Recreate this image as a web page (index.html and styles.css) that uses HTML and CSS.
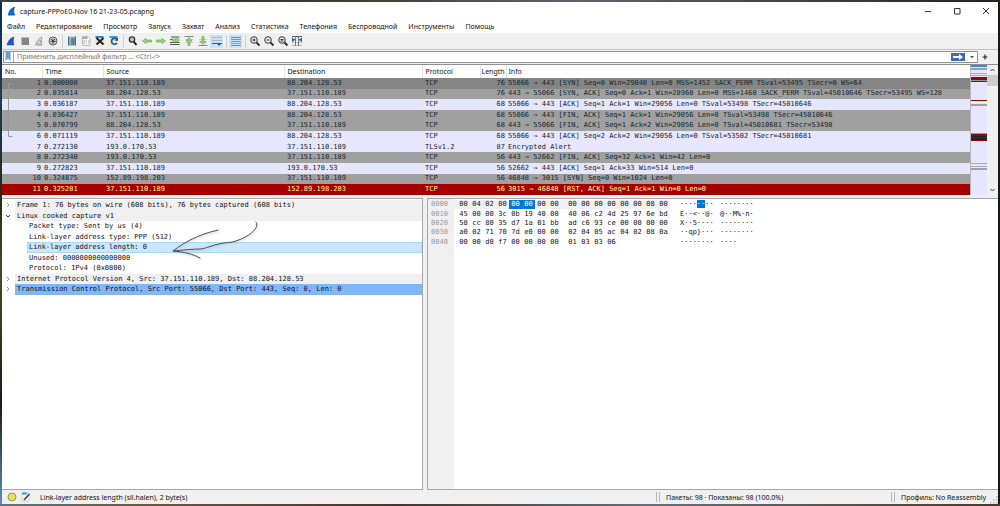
FILE: index.html
```html
<!DOCTYPE html>
<html lang="ru">
<head>
<meta charset="utf-8">
<title>capture-PPPoE0-Nov 16 21-23-05.pcapng</title>
<link rel="stylesheet" href="styles.css">
</head>
<body>
<div class="window">
  <header class="titlebar">
    <svg class="logo" viewBox="0 0 12 12"><path d="M1 11C2 6 4 2 10 1C8 4 8 8 10 11Z" fill="#1769d8"/><path d="M1 11C4 10 7 10 10 11Z" fill="#0a3f9b"/></svg>
    <h1 class="title">capture-PPPoE0-Nov 16 21-23-05.pcapng</h1>
    <div class="controls">
      <button class="control" aria-label="Свернуть"><svg viewBox="0 0 8 8"><path d="M1 4.5H7"/></svg></button>
      <button class="control" aria-label="Развернуть"><svg viewBox="0 0 8 8"><path d="M1.5 1.5H7V7H1.5Z"/></svg></button>
      <button class="control" aria-label="Закрыть"><svg viewBox="0 0 8 8"><path d="M1 1L7 7M7 1L1 7"/></svg></button>
    </div>
  </header>

  <nav class="menu">
    <button>Файл</button><button>Редактирование</button><button>Просмотр</button><button>Запуск</button><button>Захват</button><button>Анализ</button><button>Статистика</button><button>Телефония</button><button>Беспроводной</button><button>Инструменты</button><button>Помощь</button>
  </nav>

  <div class="toolbar">
    <div class="group">
      <button aria-label="Начать захват"><svg viewBox="0 0 12 12"><path d="M2 10C3 6 5 3 9 2C8 5 8 8 9 10Z" fill="#2455cd" stroke="#1b3c98" stroke-width=".5"/></svg></button>
      <button aria-label="Остановить"><svg viewBox="0 0 12 12"><rect x="2.5" y="2.5" width="7.5" height="7.5" fill="#858585"/></svg></button>
      <button aria-label="Перезапустить"><svg viewBox="0 0 12 12" fill="none" stroke="#a2a2a2"><path d="M2.5 10C4 6 6 3 9 2C8 5 8 8 9 10Z" fill="#e0e0e0"/><path d="M4.5 7.5A2 2 0 1 0 7 6M6 5L8 6L6.5 8"/></svg></button>
      <button aria-label="Параметры захвата"><svg viewBox="0 0 12 12" fill="none" stroke="#333"><circle cx="6" cy="6" r="4" stroke="#555"/><circle cx="6" cy="6" r="2" stroke-dasharray="1 .6" stroke-width="1.4"/><circle cx="6" cy="6" r="1" fill="#111" stroke="none"/></svg></button>
    </div>
    <div class="group">
      <button aria-label="Открыть"><svg viewBox="0 0 12 12"><rect x="2" y="1.5" width="8" height="9" fill="#8ab1a8"/><path d="M2.5 1.5V10.5M6 2V10.5M9.5 1.5V10.5" stroke="#486e86"/><path d="M3 2H9" stroke="#bfd3c4"/><path d="M6.5 3H8.5V10H6.5Z" fill="#527ca0"/></svg></button>
      <button aria-label="Сохранить"><svg viewBox="0 0 12 12"><path d="M2.5 1.5H8L10 3.5V10.5H2.5Z" fill="#fafafa" stroke="#b9b9b9"/><path d="M2 2H7.5V4H2Z" fill="#aaa"/><path d="M3 6H5M5.5 6H7M8 6H9.5M3 8H5M5.5 8H7M8 8H9.5" stroke="#b1b1b1"/></svg></button>
      <button aria-label="Закрыть файл"><svg viewBox="0 0 12 12"><path d="M1.5 1.5H9L10.5 3V10.5H1.5Z" fill="#eee9c3"/><path d="M1.5 2H9.5" stroke="#2589cd" stroke-width="2"/><path d="M2.5 3L9.5 9.5M9.5 3L2.5 9.5" stroke="#132235" stroke-width="1.8"/></svg></button>
      <button aria-label="Обновить"><svg viewBox="0 0 12 12"><path d="M1.5 1.5H9L10.5 3V10.5H1.5Z" fill="#eee9c3"/><path d="M1.5 2H9.5" stroke="#36a0d8" stroke-width="2"/><path d="M8.5 4A3 3 0 1 0 9 8" fill="none" stroke="#195ba9" stroke-width="1.7"/><path d="M6.5 5.5L10 2.5V6Z" fill="#195ba9"/></svg></button>
    </div>
    <div class="group">
      <button aria-label="Найти"><svg viewBox="0 0 12 12"><circle cx="5" cy="4.5" r="2.7" fill="#bbb" stroke="#222" stroke-width="1.1"/><path d="M7 7L9.5 10" stroke="#111" stroke-width="1.9"/></svg></button>
      <button aria-label="Назад"><svg viewBox="0 0 12 12" class="green"><path d="M1.5 6L5 3.5V5H10.5V7H5V8.5Z"/></svg></button>
      <button aria-label="Вперёд"><svg viewBox="0 0 12 12" class="green"><path d="M10.5 6L7 3.5V5H1.5V7H7V8.5Z"/></svg></button>
      <button aria-label="Перейти к пакету"><svg viewBox="0 0 12 12"><path d="M2 2H10.5M1 4.5H4M1 7.5H10.5M1 9.5H10.5" stroke="#555"/><path class="green" d="M10.5 5L7 2.5V4H3V6H7V7.5Z"/></svg></button>
      <button aria-label="Первый пакет"><svg viewBox="0 0 12 12"><path d="M1.5 1.5H10.5" stroke="#888"/><path d="M2 4.5H10M2 7.5H10" stroke="#ccc"/><path class="green" d="M6 2.5L9 6H7V10.5H5V6H3Z"/></svg></button>
      <button aria-label="Последний пакет"><svg viewBox="0 0 12 12"><path d="M2 4.5H10M2 7.5H10" stroke="#ccc"/><path d="M1.5 10.5H10.5" stroke="#888"/><path class="green" d="M6 9.5L9 6.5H7V1.5H5V6.5H3Z"/></svg></button>
      <button class="on" aria-label="Автопрокрутка" aria-pressed="true"><svg viewBox="0 0 12 12"><path d="M1 2.5H11M1 5.5H11" stroke="#b1b8ba"/><path d="M1 8.5H11" stroke="#4b5863"/><path d="M6 8.5H10L8 11Z" fill="#1851a4"/></svg></button>
    </div>
    <div class="group">
      <button class="on" aria-label="Раскраска" aria-pressed="true"><svg viewBox="0 0 12 12"><path d="M1 2.5H11" stroke="#7e8791"/><path d="M1 4.5H11M1 6.5H11" stroke="#e36e73"/><path d="M1 8.5H11" stroke="#8f9fd0"/><path d="M1 10.5H11" stroke="#8a8a8a"/></svg></button>
    </div>
    <div class="group">
      <button aria-label="Увеличить"><svg viewBox="0 0 12 12" class="lens"><circle cx="5" cy="5" r="3.3"/><path d="M3.5 5H6.5M5 3.5V6.5"/><path class="handle" d="M7.5 7.5L10.5 10.5"/></svg></button>
      <button aria-label="Уменьшить"><svg viewBox="0 0 12 12" class="lens"><circle cx="5" cy="5" r="3.3"/><path d="M3.5 5H6.5"/><path class="handle" d="M7.5 7.5L10.5 10.5"/></svg></button>
      <button aria-label="Обычный размер"><svg viewBox="0 0 12 12" class="lens"><circle cx="5" cy="5" r="3.3"/><path d="M3.5 4.5H6.5M3.5 6H6.5"/><path class="handle" d="M7.5 7.5L10.5 10.5"/></svg></button>
      <button aria-label="Ширина столбцов"><svg viewBox="0 0 12 12"><path d="M1 1.5H11" stroke="#555"/><path d="M1 7.5H11M1 10.5H11" stroke="#bbb"/><path d="M4.5 1V11M7.5 1V11" stroke="#777"/><path d="M1 2.5V7L4.5 4.8ZM11 2.5V7L7.5 4.8Z" fill="#2565ac"/></svg></button>
    </div>
  </div>

  <form class="filter">
    <div class="field">
      <button type="button" class="bookmark" aria-label="Закладки"><svg viewBox="0 0 8 10"><path d="M1.5 0H6.5V9L4 6.5L1.5 9Z" fill="#6b9ed4"/></svg></button>
      <input type="text" aria-label="Дисплейный фильтр" placeholder="Применить дисплейный фильтр … &lt;Ctrl-/&gt;">
      <button type="button" class="apply" aria-label="Применить"><svg viewBox="0 0 14 8"><path d="M2 3H8V1L12 4L8 7V5H2Z" fill="#fff"/></svg></button>
      <button type="button" class="history" aria-label="История"><svg viewBox="0 0 6 6"><path d="M1 2H5L3 4.5Z" fill="#555"/></svg></button>
    </div>
    <button type="button" class="add" aria-label="Добавить"><svg viewBox="0 0 6 6"><path d="M3 .5V5.5M.5 3H5.5" stroke="#222" stroke-width="1.2"/></svg></button>
  </form>

  <section class="packets">
    <div class="list">
      <table class="packet-table">
        <colgroup><col class="c-no"><col class="c-time"><col class="c-src"><col class="c-dst"><col class="c-proto"><col class="c-len"><col></colgroup>
        <thead><tr><th>No.</th><th>Time</th><th>Source</th><th>Destination</th><th>Protocol</th><th class="num">Length</th><th>Info</th></tr></thead>
        <tbody>
          <tr class="gray selected"><td>1</td><td>0.000000</td><td>37.151.110.189</td><td>88.204.128.53</td><td>TCP</td><td>76</td><td>55066 → 443 [SYN] Seq=0 Win=29040 Len=0 MSS=1452 SACK_PERM TSval=53495 TSecr=0 WS=64</td></tr>
          <tr class="gray"><td>2</td><td>0.035814</td><td>88.204.128.53</td><td>37.151.110.189</td><td>TCP</td><td>76</td><td>443 → 55066 [SYN, ACK] Seq=0 Ack=1 Win=28960 Len=0 MSS=1460 SACK_PERM TSval=45010646 TSecr=53495 WS=128</td></tr>
          <tr><td>3</td><td>0.036187</td><td>37.151.110.189</td><td>88.204.128.53</td><td>TCP</td><td>68</td><td>55066 → 443 [ACK] Seq=1 Ack=1 Win=29056 Len=0 TSval=53498 TSecr=45010646</td></tr>
          <tr class="gray"><td>4</td><td>0.036427</td><td>37.151.110.189</td><td>88.204.128.53</td><td>TCP</td><td>68</td><td>55066 → 443 [FIN, ACK] Seq=1 Ack=1 Win=29056 Len=0 TSval=53498 TSecr=45010646</td></tr>
          <tr class="gray"><td>5</td><td>0.070799</td><td>88.204.128.53</td><td>37.151.110.189</td><td>TCP</td><td>68</td><td>443 → 55066 [FIN, ACK] Seq=1 Ack=2 Win=29056 Len=0 TSval=45010681 TSecr=53498</td></tr>
          <tr><td>6</td><td>0.071119</td><td>37.151.110.189</td><td>88.204.128.53</td><td>TCP</td><td>68</td><td>55066 → 443 [ACK] Seq=2 Ack=2 Win=29056 Len=0 TSval=53502 TSecr=45010681</td></tr>
          <tr><td>7</td><td>0.272130</td><td>193.0.170.53</td><td>37.151.110.189</td><td>TLSv1.2</td><td>87</td><td>Encrypted Alert</td></tr>
          <tr class="gray"><td>8</td><td>0.272340</td><td>193.0.170.53</td><td>37.151.110.189</td><td>TCP</td><td>56</td><td>443 → 52662 [FIN, ACK] Seq=32 Ack=1 Win=42 Len=0</td></tr>
          <tr><td>9</td><td>0.272823</td><td>37.151.110.189</td><td>193.0.170.53</td><td>TCP</td><td>56</td><td>52662 → 443 [ACK] Seq=1 Ack=33 Win=514 Len=0</td></tr>
          <tr class="gray"><td>10</td><td>0.324875</td><td>152.89.198.203</td><td>37.151.110.189</td><td>TCP</td><td>56</td><td>46848 → 3015 [SYN] Seq=0 Win=1024 Len=0</td></tr>
          <tr class="red"><td>11</td><td>0.325201</td><td>37.151.110.189</td><td>152.89.198.203</td><td>TCP</td><td>56</td><td>3015 → 46848 [RST, ACK] Seq=1 Ack=1 Win=0 Len=0</td></tr>
        </tbody>
      </table>
      <svg class="bracket" viewBox="0 0 8 60"><path d="M6 1.5H2.5V54.5H6.5" fill="none" stroke="#97999e"/></svg>
    </div>
    <svg class="minimap" viewBox="0 0 16 130" preserveAspectRatio="none">
      <path d="M0 0H16V130H0Z" fill="#e7e6ff"/>
      <path d="M0 0H16V2H0Z" fill="#2c8ee8"/>
      <path d="M0 3H16V5H0ZM0 39H16V41H0ZM0 103H16V105H0Z" fill="#a0a0a0"/>
      <path d="M0 8H16V9H0ZM0 10H16V11H0ZM0 98H16V99H0ZM0 101H16V102H0Z" fill="#aaa9b5"/>
      <path d="M0 12H16V15H0ZM0 16H16V17H0ZM0 35H16V36H0Z" fill="#a40000"/>
      <path d="M0 15H16V16H0ZM0 68H16V69H0Z" fill="#999"/>
      <path d="M0 37H16V38H0Z" fill="#fff"/>
      <path d="M0 69H16V76H0Z" fill="#12272e"/>
      <path d="M0 69H16V71H0ZM0 72H16V73H0ZM0 75H16V76H0Z" fill="#a40000"/>
    </svg>
    <div class="scrollbar">
      <svg viewBox="0 0 10 10"><path d="M3 6L5 4L7 6"/></svg>
      <div class="thumb"></div>
      <svg viewBox="0 0 10 10"><path d="M3 4L5 6L7 4"/></svg>
    </div>
  </section>

  <main class="panes">
    <section class="pane details">
      <ul class="tree">
        <li class="top"><svg viewBox="0 0 8 8"><path d="M3 2L5 4L3 6"/></svg><span>Frame 1: 76 bytes on wire (608 bits), 76 bytes captured (608 bits)</span></li>
        <li class="top open"><svg viewBox="0 0 8 8"><path d="M2 3L4 5L6 3"/></svg><span>Linux cooked capture v1</span></li>
        <li><span>Packet type: Sent by us (4)</span></li>
        <li><span>Link-layer address type: PPP (512)</span></li>
        <li class="current"><span>Link-layer address length: 0</span></li>
        <li><span>Unused: 0000000000000000</span></li>
        <li><span>Protocol: IPv4 (0x0800)</span></li>
        <li class="top"><svg viewBox="0 0 8 8"><path d="M3 2L5 4L3 6"/></svg><span>Internet Protocol Version 4, Src: 37.151.110.189, Dst: 88.204.128.53</span></li>
        <li class="top related"><svg viewBox="0 0 8 8"><path d="M3 2L5 4L3 6"/></svg><span>Transmission Control Protocol, Src Port: 55066, Dst Port: 443, Seq: 0, Len: 0</span></li>
      </ul>
      <svg class="drawn-arrow" viewBox="0 0 100 44"><path d="M87 4C91 9 82 18 67 23C62 25 57 24 50 26C44 27 38 30 32 31C24 31 14 32 4 33C16 24 28 17 49 12M4 33C15 34 24 36 31 40"/></svg>
    </section>
    <section class="pane bytes">
      <table class="hex">
        <tbody>
          <tr class="hl"><th>0000</th><td>00</td><td>04</td><td>02</td><td>00</td><td class="sel">00</td><td class="sel">00</td><td>00</td><td>00</td><td class="mid">00</td><td>00</td><td>00</td><td>00</td><td>00</td><td>00</td><td>08</td><td>00</td><td class="ascii">····<span class="sel">··</span>··</td><td class="ascii2">········</td></tr>
          <tr><th>0010</th><td>45</td><td>00</td><td>00</td><td>3c</td><td>0b</td><td>19</td><td>40</td><td>00</td><td class="mid">40</td><td>06</td><td>c2</td><td>4d</td><td>25</td><td>97</td><td>6e</td><td>bd</td><td class="ascii">E··&lt;··@·</td><td class="ascii2">@··M%·n·</td></tr>
          <tr><th>0020</th><td>58</td><td>cc</td><td>80</td><td>35</td><td>d7</td><td>1a</td><td>01</td><td>bb</td><td class="mid">ad</td><td>c6</td><td>93</td><td>ce</td><td>00</td><td>00</td><td>00</td><td>00</td><td class="ascii">X··5····</td><td class="ascii2">········</td></tr>
          <tr><th>0030</th><td>a0</td><td>02</td><td>71</td><td>70</td><td>7d</td><td>e0</td><td>00</td><td>00</td><td class="mid">02</td><td>04</td><td>05</td><td>ac</td><td>04</td><td>02</td><td>08</td><td>0a</td><td class="ascii">··qp}···</td><td class="ascii2">········</td></tr>
          <tr><th>0040</th><td>00</td><td>00</td><td>d0</td><td>f7</td><td>00</td><td>00</td><td>00</td><td>00</td><td class="mid">01</td><td>03</td><td>03</td><td>06</td><td></td><td></td><td></td><td></td><td class="ascii">········</td><td class="ascii2">····</td></tr>
        </tbody>
      </table>
    </section>
  </main>

  <footer class="status">
    <div class="field-info">
      <svg viewBox="0 0 10 10"><circle cx="5" cy="5" r="4" fill="#e2e05c" stroke="#9a9a55"/></svg>
      <svg viewBox="0 0 10 10"><path d="M1 1H8V9.5H1Z" fill="#f4f4ee" stroke="#bbb" stroke-width=".5"/><path d="M1 1.5H6" stroke="#2ba5d5" stroke-width="2"/><path d="M3 8L8.5 2" stroke="#444" stroke-width="1.6"/></svg>
      <span>Link-layer address length (sll.halen), 2 byte(s)</span>
    </div>
    <div class="counts">Пакеты: 98 · Показаны: 98 (100.0%)</div>
    <div class="profile">Профиль: No Reassembly</div>
    <svg class="grip" viewBox="0 0 8 8"><path d="M6 0H7.5V1.5H6ZM6 3H7.5V4.5H6ZM6 6H7.5V7.5H6ZM3 3H4.5V4.5H3ZM3 6H4.5V7.5H3ZM0 6H1.5V7.5H0Z" fill="#b5b5b5"/></svg>
  </footer>
</div>
</body>
</html>
```
FILE: styles.css
```css
* { box-sizing: border-box; }

body {
  margin: 0;
  padding: 2px;
  height: 100vh;
  font: 7px/9px "Noto Sans", "Open Sans", sans-serif;
  color: #111;
  background:
    linear-gradient(90deg, #3b3f48, #332f2b 20%, #45423c 40%, #655f70 58%, #4b454f 75%, #22251f) top / 100% 2px no-repeat,
    linear-gradient(90deg, #5a7684, #6b563f 15%, #43362f 40%, #64717a 65%, #4b3a2c) bottom / 100% 2px no-repeat,
    linear-gradient(#0c2c58, #1d3c55 18%, #232b17 38%, #484a22 55%, #1c1c17 80%, #5c94b0) left / 2px 100% no-repeat,
    #171a17;
}

button {
  border: 0;
  padding: 0;
  background: none;
  font: inherit;
  color: inherit;
}

svg { display: block; }

.window {
  height: 100%;
  display: flex;
  flex-direction: column;
  background: #f0f0f0;
}

/* Title and menu */
.titlebar {
  display: flex;
  align-items: center;
  height: 18px;
  padding: 0 8px 0 5px;
  gap: 3px;
  background: #fff;
}

.logo { width: 10px; height: 10px; }

.title {
  flex: 1;
  margin: 0;
  font-size: 7px;
  font-weight: 400;
}

.controls { display: flex; gap: 21px; }

.control svg {
  width: 8px;
  height: 8px;
  fill: none;
  stroke: #333;
}

.menu {
  display: flex;
  align-items: center;
  gap: 11px;
  height: 13px;
  padding: 0 5px;
  background: #fff;
}

/* Toolbar */
.toolbar {
  display: flex;
  align-items: center;
  height: 17px;
  padding: 0 2px;
  border-bottom: 1px solid #c4c4c4;
}

.group {
  display: flex;
  gap: 1px;
}

.group + .group {
  margin-left: 3px;
  padding-left: 2px;
  border-left: 1px solid #cfcfcf;
}

.toolbar button { width: 13px; height: 13px; }
.toolbar svg { width: 12px; height: 12px; margin: 0 auto; }
.toolbar .on { background: #c4e2f8; }
.green { fill: #9dd67c; stroke: #58a038; stroke-width: .6; }
.lens { fill: none; stroke: #333; }
.lens .handle { stroke-width: 2; }

/* Display filter */
.filter {
  display: flex;
  align-items: center;
  gap: 4px;
  height: 14px;
  padding: 0 10px 0 1px;
}

.field {
  flex: 1;
  display: flex;
  align-items: center;
  height: 12px;
  border: 1px solid #949494;
  background: #fff;
}

.bookmark {
  height: 10px;
  padding-right: 1px;
  border-right: 1px solid #aaa;
}

.bookmark svg { width: 8px; height: 10px; }

.field input {
  flex: 1;
  min-width: 0;
  height: 10px;
  padding: 0 3px;
  border: 0;
  outline: 0;
  background: none;
  font: 7px/10px "Noto Sans", "Open Sans", sans-serif;
}

.field input::placeholder { color: #7a7a7a; }
.apply { background: #3a6fb8; }
.apply svg { width: 14px; height: 8px; }
.history { margin: 0 2px 0 4px; }
.history svg, .add svg { width: 6px; height: 6px; }

/* Packet list */
.packets {
  display: flex;
  height: 131px;
  border-top: 1px solid #8e9096;
}

.list {
  position: relative;
  flex: 1;
  min-width: 0;
  background: #fff;
}

.packet-table {
  width: 100%;
  height: 100%;
  table-layout: fixed;
  border-collapse: collapse;
}

.c-no { width: 40px; }
.c-time { width: 61px; }
.c-src { width: 181px; }
.c-dst { width: 138px; }
.c-proto { width: 58px; }
.c-len { width: 26px; }

.packet-table th {
  height: 13px;
  padding: 0 3px;
  border-right: 1px solid #e4e4e4;
  font-weight: 400;
  text-align: left;
}

.packet-table th:last-child { border: 0; padding: 0 2px; }
.packet-table th.num { padding: 0 1px; text-align: right; }

.packet-table td {
  padding: 0 3px;
  font: 7px/9px "DejaVu Sans Mono", monospace;
  white-space: nowrap;
  overflow: hidden;
}

.packet-table td:nth-child(1),
.packet-table td:nth-child(6) { padding: 0 1px; text-align: right; }
.packet-table td:nth-child(2),
.packet-table td:nth-child(7) { padding: 0 2px; }
.packet-table tbody tr { background: #e7e6ff; color: #12272e; }
.packet-table tbody .gray { background: #a0a0a0; }
.packet-table tbody .selected { background: #858585; }
.packet-table tbody .red { background: #a40000; color: #fffc9c; }

.bracket {
  position: absolute;
  left: 4px;
  top: 17px;
  width: 8px;
  height: 60px;
}

.minimap { width: 17px; height: 100%; border-left: 1px solid #b5b5bd; }

.scrollbar {
  display: flex;
  flex-direction: column;
  width: 11px;
}

.scrollbar svg {
  height: 10px;
  fill: none;
  stroke: #444;
}

.thumb {
  height: 11px;
  margin-bottom: auto;
  background: #cdcdcd;
}

/* Lower panes */
.panes {
  flex: 1;
  display: grid;
  grid-template-columns: 421fr 571fr;
  gap: 4px;
  min-height: 0;
  padding-top: 3px;
}

.pane {
  position: relative;
  border: 1px solid #a3a7ad;
  background: #fff;
  overflow: hidden;
}

.details { border-left: 0; }
.bytes { border-right: 0; }

.tree {
  display: grid;
  grid-auto-rows: 1fr;
  height: 96px;
  margin: 0;
  padding: 1px 0 0;
  list-style: none;
  font: 7px/10px "DejaVu Sans Mono", monospace;
  white-space: nowrap;
}

.tree li {
  display: flex;
  padding-left: 25px;
}

.tree span { flex: 1; padding-left: 2px; }
.tree .top { padding-left: 2px; }
.tree .top span { background: #f0f0f0; }
.tree svg { width: 8px; height: 8px; margin: 1px 3px 0 0; fill: none; stroke: #999; }
.tree .open svg { stroke: #333; }
.tree .current span { background: #cbe7fd; outline: 1px solid #a9d8f8; outline-offset: -1px; }
.tree .related span { background: #80b6f8; }

.drawn-arrow {
  position: absolute;
  left: 167px;
  top: 19px;
  width: 100px;
  height: 44px;
  fill: none;
  stroke: #46505a;
  stroke-linecap: round;
  filter: drop-shadow(1px 1px 1px #bbb);
}

.bytes { background: linear-gradient(90deg, #f0f0f0 26px, #fff 26px); }

.hex {
  height: 47px;
  margin-top: 1px;
  border-collapse: collapse;
  font: 7px/9px "DejaVu Sans Mono", monospace;
}

.hex th {
  width: 26px;
  padding: 0 0 0 3px;
  font-weight: 400;
  text-align: left;
  color: #999;
}

.hex td { width: 13px; padding: 0; text-align: center; }
.hex td:nth-child(2) { width: 16px; padding-left: 3px; }
.hex .mid { width: 18px; padding-left: 5px; }
.hex .ascii { width: 50px; padding-left: 10px; text-align: left; }
.hex .ascii2 { width: 39px; text-align: left; }
.hl td { background: #f0f0f0; }
.hex .sel { background: #0078d7; color: #fff; }
.hex .ascii, .hex .ascii2 { background: none; }

/* Status bar */
.status {
  display: flex;
  align-items: center;
  height: 14px;
}

.status > div { display: flex; align-items: center; height: 10px; }
.field-info { flex: 1; gap: 4px; padding-left: 5px; }
.field-info svg { width: 10px; height: 10px; }
.field-info span { padding-left: 5px; }
.counts, .profile { padding-left: 6px; border-left: 4px double #b8b8b8; }
.counts { width: 235px; }
.profile { width: 99px; white-space: nowrap; }
.grip { width: 8px; height: 8px; align-self: flex-end; }
```
